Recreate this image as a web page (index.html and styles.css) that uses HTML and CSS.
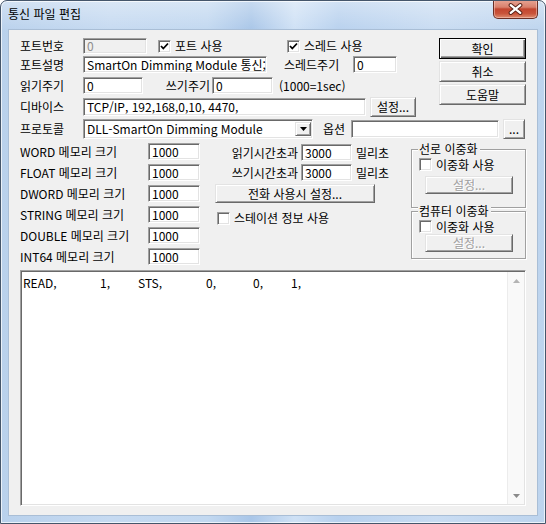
FILE: index.html
```html
<!DOCTYPE html>
<html lang="ko">
<head>
<meta charset="utf-8">
<title>통신 파일 편집</title>
<link rel="stylesheet" href="styles.css">
</head>
<body>
<div class="win">
  <div class="titlebar">
    <span class="title">통신 파일 편집</span>
    <div class="close">
      <svg width="45" height="18" viewBox="0 0 45 18">
        <path d="M17.5 5 L27.5 13 M27.5 5 L17.5 13" stroke="#5b2218" stroke-width="4.4" stroke-linecap="round"/>
        <path d="M17.5 5 L27.5 13 M27.5 5 L17.5 13" stroke="#ffffff" stroke-width="2.4" stroke-linecap="round"/>
      </svg>
    </div>
  </div>
  <div class="client">
    <div class="top">
      <div class="top-left">
        <div class="row r1">
          <span class="lbl l63">포트번호</span>
          <span class="edit dis w64 h16">0</span>
          <span class="chk chk1"><span class="box"><svg width="9" height="9" viewBox="0 0 9 9"><path d="M1 4 L3.3 6.5 L8 1.5" stroke="#000" stroke-width="1.8" fill="none"/></svg></span><span class="ctext">포트 사용</span></span>
          <span class="chk"><span class="box"><svg width="9" height="9" viewBox="0 0 9 9"><path d="M1 4 L3.3 6.5 L8 1.5" stroke="#000" stroke-width="1.8" fill="none"/></svg></span><span class="ctext">스레드 사용</span></span>
        </div>
        <div class="row r2">
          <span class="lbl l63">포트설명</span>
          <span class="edit w184 h17">SmartOn Dimming Module 통신;</span>
          <span class="lbl l69 ml17">스레드주기</span>
          <span class="edit w44 h17">0</span>
        </div>
        <div class="row r3">
          <span class="lbl l63">읽기주기</span>
          <span class="edit w60 h17">0</span>
          <span class="lbl l69 right">쓰기주기</span>
          <span class="edit w61 h17">0</span>
          <span class="lbl ml6">(1000=1sec)</span>
        </div>
        <div class="row r4">
          <span class="lbl l63">디바이스</span>
          <span class="edit w283 h18">TCP/IP, 192,168,0,10, 4470,</span>
          <span class="btn ml4 bw46 bh20">설정...</span>
        </div>
      </div>
      <div class="btncol">
        <span class="btn def bw87 bh21">확인</span>
        <span class="btn bw87 bh21">취소</span>
        <span class="btn bw87 bh21">도움말</span>
      </div>
    </div>
    <div class="row r5">
      <span class="lbl l63">프로토콜</span>
      <span class="edit combo w230 h20"><span class="ctxt">DLL-SmartOn Dimming Module</span><span class="drop"><svg width="7" height="4" viewBox="0 0 7 4"><path d="M0 0 H7 L3.5 4 Z" fill="#000"/></svg></span></span>
      <span class="lbl l28 ml10">옵션</span>
      <span class="edit w148 h18"></span>
      <span class="btn ml4 bw22 bh20">...</span>
    </div>
    <div class="lower">
      <div class="col-left">
        <div class="mrow"><span class="lbl l128">WORD 메모리 크기</span><span class="edit w52 h17">1000</span></div>
        <div class="mrow"><span class="lbl l128">FLOAT 메모리 크기</span><span class="edit w52 h17">1000</span></div>
        <div class="mrow"><span class="lbl l128">DWORD 메모리 크기</span><span class="edit w52 h17">1000</span></div>
        <div class="mrow"><span class="lbl l128">STRING 메모리 크기</span><span class="edit w52 h17">1000</span></div>
        <div class="mrow"><span class="lbl l128">DOUBLE 메모리 크기</span><span class="edit w52 h17">1000</span></div>
        <div class="mrow"><span class="lbl l128">INT64 메모리 크기</span><span class="edit w52 h17">1000</span></div>
      </div>
      <div class="col-mid">
        <div class="trow t1"><span class="lbl l86 right">읽기시간초과</span><span class="edit w51 h17">3000</span><span class="lbl ml4">밀리초</span></div>
        <div class="trow t2"><span class="lbl l86 right">쓰기시간초과</span><span class="edit w51 h17">3000</span><span class="lbl ml4">밀리초</span></div>
        <span class="btn phone bw160 bh19">전화 사용시 설정...</span>
        <div class="chkrow"><span class="chk"><span class="box"></span><span class="ctext">스테이션 정보 사용</span></span></div>
      </div>
      <div class="col-right">
        <div class="group g1">
          <span class="gtitle">선로 이중화</span>
          <div class="gchk"><span class="chk"><span class="box"></span><span class="ctext">이중화 사용</span></span></div>
          <span class="btn disabled gbtn">설정...</span>
        </div>
        <div class="group g2">
          <span class="gtitle">컴퓨터 이중화</span>
          <div class="gchk"><span class="chk"><span class="box"></span><span class="ctext">이중화 사용</span></span></div>
          <span class="btn disabled gbtn">설정...</span>
        </div>
      </div>
    </div>
    <div class="memo">
      <div class="memo-text"><span class="cA">READ,</span><span class="cB">1,</span><span class="cC">STS,</span><span class="cD">0,</span><span class="cE">0,</span><span>1,</span></div>
      <div class="sbar">
        <span class="sarrow"><svg width="7" height="4" viewBox="0 0 7 4"><path d="M0 4 H7 L3.5 0 Z" fill="#b4b4b4"/></svg></span>
        <span class="strack"></span>
        <span class="sarrow"><svg width="7" height="4" viewBox="0 0 7 4"><path d="M0 0 H7 L3.5 4 Z" fill="#8a8a8a"/></svg></span>
      </div>
    </div>
  </div>
</div>
</body>
</html>
```

FILE: styles.css
```css
html, body {
  margin: 0;
  padding: 0;
  background: #ffffff;
}

.win {
  width: 546px;
  height: 524px;
  box-sizing: border-box;
  border: 1px solid #45566b;
  border-radius: 7px 7px 0 0;
  background:
    linear-gradient(to bottom, rgba(255,255,255,0.35), rgba(255,255,255,0) 30px),
    linear-gradient(to right, #b9d1ec 0%, #c6daf1 20%, #c2d8f0 38%, #a9c6e8 46%, #cfe1f5 54%, #b8d1ee 62%, #c9dcf2 80%, #bdd4ee 100%);
  font-family: "Noto Sans CJK KR", "Noto Sans", sans-serif;
  font-size: 12px;
  color: #000;
  overflow: hidden;
  box-shadow: inset 0 0 0 1px rgba(255,255,255,0.7);
}

.titlebar {
  height: 28px;
  display: flex;
  align-items: flex-start;
}

.title {
  margin-left: 7px;
  margin-top: 5px;
  line-height: 16px;
  font-size: 12px;
  color: #000;
}

.close {
  margin-left: auto;
  margin-right: 7px;
  margin-top: -1px;
  width: 45px;
  height: 19px;
  box-sizing: border-box;
  border: 1px solid #6a2e25;
  border-top: none;
  border-radius: 0 0 5px 5px;
  background: linear-gradient(to bottom, #e8a595 0%, #d9806c 40%, #c2452f 50%, #c9543b 75%, #dd8c70 100%);
  box-shadow: inset 0 0 0 1px rgba(255,220,210,0.45);
  display: flex;
  align-items: center;
  justify-content: center;
}

.close svg { display: block; }

.client {
  margin-left: 7px;
  width: 530px;
  height: 487px;
  box-sizing: border-box;
  border: 1px solid #a9bed6;
  background: #f0f0f0;
  padding: 7px 0 0 11px;
}

/* generic */
.row {
  display: flex;
  align-items: center;
}

.lbl {
  display: inline-block;
  white-space: nowrap;
  line-height: 14px;
  flex: none;
}

.right { text-align: right; padding-right: 2px; box-sizing: border-box; }

.l28 { width: 28px; }
.l63 { width: 63px; }
.l69 { width: 69px; }
.l86 { width: 86px; padding-right: 3px; }
.l128 { width: 128px; }

.ml4 { margin-left: 4px; }
.ml6 { margin-left: 6px; }
.ml10 { margin-left: 10px; }
.ml17 { margin-left: 17px; }

.edit {
  display: inline-flex;
  align-items: center;
  box-sizing: border-box;
  flex: none;
  background: #ffffff;
  border: 1px solid;
  border-color: #a0a0a0 #ffffff #ffffff #a0a0a0;
  box-shadow: inset 1px 1px 0 #696969, inset -1px -1px 0 #e3e3e3;
  padding: 0 2px 0 3px;
  white-space: nowrap;
  overflow: hidden;
  line-height: 14px;
}

.edit.dis {
  background: #f0f0f0;
  color: #8d8d8d;
}

.w44 { width: 44px; }
.w51 { width: 51px; }
.w52 { width: 52px; }
.w60 { width: 60px; }
.w61 { width: 61px; }
.w64 { width: 64px; }
.w148 { width: 148px; }
.w184 { width: 184px; }
.w230 { width: 230px; }
.w283 { width: 283px; }
.h16 { height: 16px; }
.h17 { height: 17px; }
.h18 { height: 18px; }
.h20 { height: 20px; }

.btn {
  display: inline-flex;
  align-items: center;
  justify-content: center;
  box-sizing: border-box;
  flex: none;
  background: #f0f0f0;
  border: 1px solid;
  border-color: #e3e3e3 #696969 #696969 #e3e3e3;
  box-shadow: inset 1px 1px 0 #ffffff, inset -1px -1px 0 #a0a0a0;
  line-height: 14px;
  white-space: nowrap;
}

.btn.def {
  border-color: #000;
  box-shadow: inset 1px 1px 0 #ffffff, inset -1px -1px 0 #696969, inset -2px -2px 0 #a0a0a0;
}

.btn.disabled {
  color: #a0a0a0;
  text-shadow: 1px 1px 0 #ffffff;
}

.bw22 { width: 22px; }
.bw46 { width: 46px; }
.bw87 { width: 87px; }
.bw160 { width: 160px; }
.bh19 { height: 19px; }
.bh20 { height: 20px; }
.bh21 { height: 21px; }

/* checkbox */
.chk {
  display: inline-flex;
  align-items: center;
  flex: none;
  white-space: nowrap;
}

.chk1 { width: 129px; }

.box {
  width: 13px;
  height: 13px;
  box-sizing: border-box;
  background: #ffffff;
  border: 1px solid;
  border-color: #a0a0a0 #ffffff #ffffff #a0a0a0;
  box-shadow: inset 1px 1px 0 #696969, inset -1px -1px 0 #e3e3e3;
  display: inline-flex;
  align-items: center;
  justify-content: center;
  flex: none;
}

.box svg { display: block; }

.ctext {
  margin-left: 4px;
  line-height: 14px;
}

/* top area */
.top {
  display: flex;
  height: 80px;
}

.top-left {
  width: 419px;
  flex: none;
}

.r1 { height: 18px; }
.r1 .chk1 { margin-left: 11px; }
.r2 { height: 17px; margin-top: 1px; }
.r3 { height: 17px; margin-top: 4px; }
.r4 { height: 20px; margin-top: 3px; }
.r5 { height: 20px; margin-top: 2px; }

.btncol {
  display: flex;
  flex-direction: column;
  gap: 2px;
  margin-top: 1px;
}

/* combo */
.combo {
  padding: 2px 2px 2px 3px;
  align-items: stretch;
  overflow: visible;
}

.ctxt {
  flex: 1;
  display: flex;
  align-items: center;
  white-space: nowrap;
}

.drop {
  width: 16px;
  flex: none;
  box-sizing: border-box;
  background: #f0f0f0;
  border: 1px solid;
  border-color: #e3e3e3 #696969 #696969 #e3e3e3;
  box-shadow: inset 1px 1px 0 #ffffff, inset -1px -1px 0 #a0a0a0;
  display: flex;
  align-items: center;
  justify-content: center;
  margin-right: -1px;
}

.drop svg { display: block; }

/* lower area */
.lower {
  display: flex;
  margin-top: 4px;
}

.col-left {
  width: 195px;
  flex: none;
  display: flex;
  flex-direction: column;
  gap: 4px;
}

.mrow {
  display: flex;
  align-items: center;
  height: 17px;
}

.col-mid {
  width: 196px;
  flex: none;
  display: flex;
  flex-direction: column;
  align-items: flex-start;
}

.trow {
  display: flex;
  align-items: center;
  height: 17px;
}

.t1 { margin-top: 1px; }
.t2 { margin-top: 3px; }

.phone { margin-top: 3px; }

.chkrow {
  margin-top: 8px;
  padding-left: 2px;
  height: 14px;
  display: flex;
  align-items: center;
}

.col-right {
  width: 116px;
  flex: none;
}

.group {
  box-sizing: border-box;
  width: 115px;
  border: 1px solid #a0a0a0;
  box-shadow: inset 1px 1px 0 #ffffff, 1px 1px 0 #ffffff;
  display: flex;
  flex-direction: column;
  align-items: flex-start;
}

.g1 { margin-top: 6px; height: 59px; }
.g2 { margin-top: 3px; height: 48px; }

.gtitle {
  margin-top: -8px;
  margin-left: 6px;
  padding: 0 2px 0 1px;
  background: #f0f0f0;
  line-height: 14px;
  height: 14px;
  white-space: nowrap;
}

.gchk {
  margin-left: 7px;
  height: 13px;
  display: flex;
  align-items: center;
}

.g1 .gchk { margin-top: 2px; }
.g2 .gchk { margin-top: 2px; }

.gbtn {
  margin-left: 13px;
  width: 88px;
  height: 18px;
}

.g1 .gbtn { margin-top: 5px; }
.g2 .gbtn { margin-top: 1px; }

/* memo */
.memo {
  margin-top: 5px;
  width: 506px;
  height: 236px;
  box-sizing: border-box;
  background: #ffffff;
  border: 1px solid;
  border-color: #a0a0a0 #ffffff #ffffff #a0a0a0;
  box-shadow: inset 1px 1px 0 #696969, inset -1px -1px 0 #e3e3e3;
  display: flex;
  padding: 1px 1px 1px 1px;
}

.memo-text {
  flex: 1;
  padding: 4px 0 0 1px;
  white-space: nowrap;
  line-height: 14px;
}

.memo-text span { display: inline-block; }
.cA { width: 77px; }
.cB { width: 38px; }
.cC { width: 68px; }
.cD { width: 47px; }
.cE { width: 38px; }

.sbar {
  width: 17px;
  flex: none;
  display: flex;
  flex-direction: column;
  background: #f9f9f9;
  border-left: 1px solid #ececec;
  box-sizing: border-box;
}

.sarrow {
  height: 17px;
  display: flex;
  align-items: center;
  justify-content: center;
  flex: none;
}

.sarrow svg { display: block; }

.strack { flex: 1; }
```
